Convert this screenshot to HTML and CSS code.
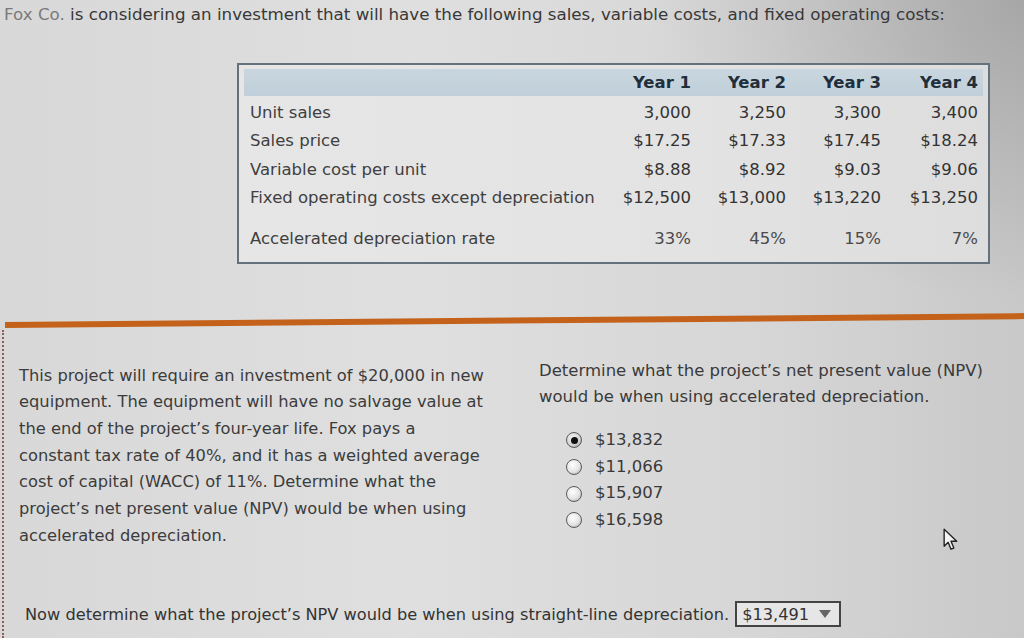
FILE: index.html
```html
<!DOCTYPE html>
<html>
<head>
<meta charset="utf-8">
<link rel="stylesheet" href="styles.css">
</head>
<body>
<div class="page">
  <p class="title"><span class="fox">Fox Co.</span> is considering an investment that will have the following sales, variable costs, and fixed operating costs:</p>

  <div class="table-box">
    <div class="row head">
      <div class="lbl"></div>
      <div class="num">Year 1</div>
      <div class="num">Year 2</div>
      <div class="num">Year 3</div>
      <div class="num">Year 4</div>
    </div>
    <div class="row">
      <div class="lbl">Unit sales</div>
      <div class="num">3,000</div>
      <div class="num">3,250</div>
      <div class="num">3,300</div>
      <div class="num">3,400</div>
    </div>
    <div class="row">
      <div class="lbl">Sales price</div>
      <div class="num">$17.25</div>
      <div class="num">$17.33</div>
      <div class="num">$17.45</div>
      <div class="num">$18.24</div>
    </div>
    <div class="row">
      <div class="lbl">Variable cost per unit</div>
      <div class="num">$8.88</div>
      <div class="num">$8.92</div>
      <div class="num">$9.03</div>
      <div class="num">$9.06</div>
    </div>
    <div class="row">
      <div class="lbl">Fixed operating costs except depreciation</div>
      <div class="num">$12,500</div>
      <div class="num">$13,000</div>
      <div class="num">$13,220</div>
      <div class="num">$13,250</div>
    </div>
    <div class="row rate">
      <div class="lbl">Accelerated depreciation rate</div>
      <div class="num">33%</div>
      <div class="num">45%</div>
      <div class="num">15%</div>
      <div class="num">7%</div>
    </div>
  </div>

  <div class="rule"></div>

  <div class="main">
    <p class="left">This project will require an investment of $20,000 in new<br>equipment. The equipment will have no salvage value at<br>the end of the project’s four-year life. Fox pays a<br>constant tax rate of 40%, and it has a weighted average<br>cost of capital (WACC) of 11%. Determine what the<br>project’s net present value (NPV) would be when using<br>accelerated depreciation.</p>
    <div class="right">
      <p class="q">Determine what the project’s net present value (NPV) would be when using accelerated depreciation.</p>
      <ul class="opts">
        <li><span class="radio on"></span>$13,832</li>
        <li><span class="radio"></span>$11,066</li>
        <li><span class="radio"></span>$15,907</li>
        <li><span class="radio"></span>$16,598</li>
      </ul>
      <svg class="cursor" width="16" height="23" viewBox="0 0 14 20"><path d="M1 1 L1 16 L4.5 12.5 L7 18.5 L9.5 17.5 L7 11.5 L12 11.5 Z" fill="#f4f4f4" stroke="#222" stroke-width="1.2" stroke-linejoin="round"/></svg>
    </div>
  </div>

  <div class="bottom">
    <span>Now determine what the project’s NPV would be when using straight-line depreciation.</span>
    <span class="select">$13,491<span class="arrow"></span></span>
  </div>
</div>
</body>
</html>
```

FILE: styles.css
```css
html, body {
  margin: 0;
  padding: 0;
}
body {
  width: 1024px;
  height: 638px;
  overflow: hidden;
  font-family: "DejaVu Sans", Verdana, sans-serif;
  color: #3a3a3a;
  background:
    radial-gradient(ellipse 380px 300px at 1024px 0px, rgba(90,90,90,0.3), rgba(90,90,90,0) 100%),
    linear-gradient(90deg, #d8d8d8 0%, #dfdfdf 40%, #d6d6d6 75%, #c8c8c8 100%);
}
.page {
  position: relative;
  height: 638px;
}
.title {
  margin: 0;
  padding: 4px 0 0 4px;
  font-size: 16.7px;
  line-height: 20px;
  color: #383838;
}
.title .fox {
  color: #7a7a7a;
}
.table-box {
  margin: 39px 0 0 237px;
  width: 739px;
  padding: 4px 5px 9px 5px;
  border: 2px solid #64727e;
  background: linear-gradient(90deg, #e6e6e6, #e3e3e3 60%, #dddddd);
  font-size: 16.5px;
}
.row {
  display: grid;
  grid-template-columns: 352px 95px 95px 95px 97px;
  height: 28.5px;
  align-items: center;
  color: #333;
}
.row .lbl {
  padding-left: 6px;
  color: #3f3f3f;
}
.row .num {
  text-align: right;
}
.row.head {
  height: 27px;
  background: linear-gradient(180deg, #c9d6df, #c0cfda);
  font-weight: bold;
  color: #1f2e3a;
  margin-bottom: 2px;
}
.row.rate {
  margin-top: 12px;
  color: #4a4a4a;
}
.rule {
  margin: 58px 0 0 5px;
  height: 6px;
  background: #c4621c;
  transform: rotate(-0.5deg);
  transform-origin: left center;
  width: 1030px;
}
.main {
  display: flex;
  margin-top: 30px;
  font-size: 16.3px;
  line-height: 26.7px;
}
.left {
  margin: 5px 0 0 19px;
  width: 480px;
  white-space: nowrap;
  color: #3c3c3c;
}
.right {
  position: relative;
  margin-left: 40px;
  flex: 1;
  font-size: 16.5px;
}
.q {
  margin: 0;
  width: 448px;
  color: #3a3a3a;
}
.opts {
  list-style: none;
  margin: 16px 0 0 27px;
  padding: 0;
}
.opts li {
  display: flex;
  align-items: center;
  height: 26.7px;
}
.radio {
  display: inline-block;
  width: 14px;
  height: 14px;
  border-radius: 50%;
  border: 1px solid #5a5a5a;
  background: radial-gradient(circle at 40% 35%, #ffffff, #e4e4e4 55%, #a8a8a8);
  margin-right: 13px;
  position: relative;
}
.radio.on {
  background: radial-gradient(circle at 40% 35%, #f4f4f4, #d0d0d0 60%, #8a8a8a);
}
.radio.on::after {
  content: "";
  position: absolute;
  left: 3.5px;
  top: 3.5px;
  width: 7px;
  height: 7px;
  border-radius: 50%;
  background: #111;
}
.cursor {
  position: absolute;
  left: 404px;
  top: 170px;
}
.bottom {
  display: flex;
  align-items: center;
  margin: 52px 0 0 25px;
  font-size: 16.2px;
  color: #333;
}
.select {
  display: inline-flex;
  align-items: center;
  margin-left: 6px;
  height: 22px;
  padding: 0 8px 0 5px;
  border: 2px solid #444;
  background: #e6e6e6;
}
.arrow {
  display: inline-block;
  margin-left: 10px;
  width: 0;
  height: 0;
  border-left: 6px solid transparent;
  border-right: 6px solid transparent;
  border-top: 8px solid #666;
}
.page::before {
  content: "";
  position: absolute;
  left: 2px;
  top: 330px;
  bottom: 0;
  border-left: 2px dotted #8a6050;
}
```
